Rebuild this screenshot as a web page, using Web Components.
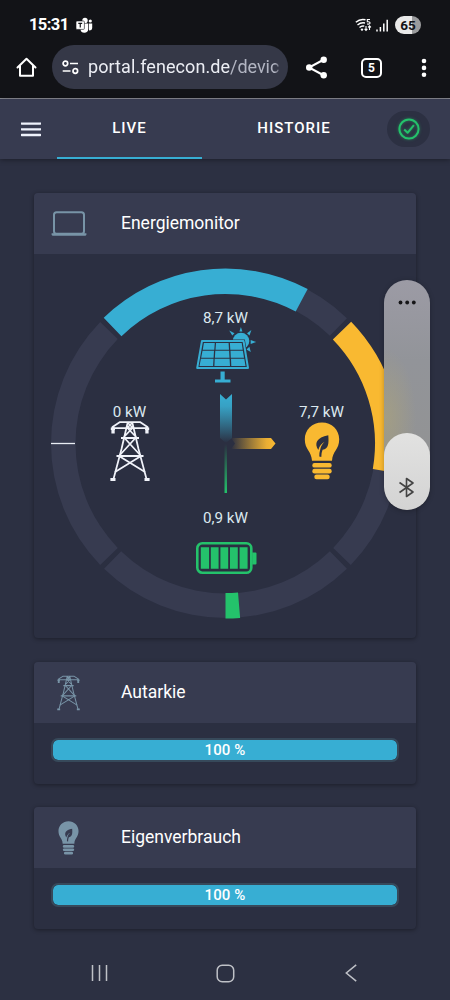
<!DOCTYPE html>
<html lang="de">
<head>
<meta charset="utf-8">
<meta name="viewport" content="width=device-width">
<title>Energiemonitor</title>
<style>
html,body{margin:0;padding:0;height:100%;background:#2c3042;overflow:hidden}
body{font-family:Roboto,"Liberation Sans",sans-serif;color:#fff}
</style>
</head>
<body>
<phone-screen></phone-screen>
<script>
function define(name, css, html, setup) {
  const t = document.createElement('template');
  t.innerHTML = `<style>:host{display:block;box-sizing:border-box}*{box-sizing:border-box}svg{display:block;flex:none}${css}</style>${html}`;
  customElements.define(name, class extends HTMLElement {
    constructor() {
      super();
      this.attachShadow({ mode: 'open' }).appendChild(t.content.cloneNode(true));
    }
    connectedCallback() { if (setup) setup(this, this.shadowRoot); }
  });
}

/* ---------- shared glyphs ---------- */
const GLYPHS = {
  laptop: ['0 0 36 26', '<rect x="3" y="1.2" width="30" height="21.6" rx="2.6" fill="none" stroke="currentColor" stroke-width="2"/><path d="M.6 22.2H35.4V23.6Q35.2 24.8 34 24.8H2Q.8 24.8.6 23.6Z" fill="currentColor"/>'],
  pylon: ['0 0 40 62', `<g fill="none" stroke="currentColor" stroke-width="1.75" stroke-linejoin="round">
    <path d="M2.5 8V7L10 2H30L37.500 7V8M2.500 8H37.500M17.800 2 11.500 29 3.500 59M22.200 2 28.500 29 36.500 59M17.500 8 27 18M22.500 8 13 18M17 2 23 8M23 2 17 8"/>
    <path d="M11 18H29M6.500 36H33.500" stroke-width="2.200"/><path d="M14.500 18 31 36M25.500 18 9 36M9 36 35 52M31 36 5 52"/></g>
    <path d="M.8 7.500H5V10H4.700V13.500H1.400V10H.8ZM39.200 7.500H35V10H35.300V13.500H38.600V10H39.200ZM.4 58H5.500V61H.4ZM34.500 58H39.600V61H34.500Z" fill="currentColor"/>`],
  bulb: ['0 0 36 58', `<path d="M18 .5C8.300.5.8 7.900.8 17.200C.8 28 7.400 28.500 8 38.800H28C28.600 28.500 35.200 28 35.200 17.200C35.200 7.900 27.700.5 18 .5Z" fill="currentColor"/>
    <rect x="8.300" y="41" width="19.400" height="4.600" rx="2.200" fill="currentColor"/><rect x="8.300" y="46.800" width="19.400" height="4.600" rx="2.200" fill="currentColor"/><rect x="10.300" y="52.500" width="15.400" height="4.700" rx="2.200" fill="currentColor"/>
    <path d="M24.300 13.300C24.900 21.500 24.600 27 18.600 27.800Q17.400 30.500 17.300 35L15.300 34.600Q15.200 30.500 16.400 26.800C17 23.800 18.600 22 20.600 19.800C17.600 21.500 15.400 24 14.300 28C10 21.500 12.500 15.500 24.300 13.300Z" fill="var(--hole,#2c3042)"/>`],
  solar: ['0 0 60 55', `<g fill="currentColor"><circle cx="45" cy="12" r="8.300"/>
    <path d="M43.400 2.400 44.900-1.900 46.400 2.400ZM51 4.300 55.400 1 53.500 6.400ZM54.700 11 60.200 13 54.700 15ZM53.400 17.800 54.800 23 50.400 20.600ZM38.500 4.200 33.200 1.600 36.300 6.600Z"/></g>
    <path d="M6 12H47.500L52 39H1.200Z" fill="#2c3042" stroke="#2c3042" stroke-width="3.200"/>
    <path d="M6 12H47.500L52 39H1.200Z" fill="none" stroke="currentColor" stroke-width="2" stroke-linejoin="round"/>
    <path fill="currentColor" d="M7.900 14H18.800L18.300 20.700H6.800ZM20 14H32.600L33 20.700H19.500ZM33.900 14H45.700L46.700 20.700H34.300ZM6.500 21.800H18L17.600 28.700H5.200ZM19.300 21.800H33.100L33.500 28.700H18.900ZM34.500 21.800H46.900L48 28.700H34.800ZM4.900 29.800H17.500L17.100 37H3.500ZM18.700 29.800H33.600L34 37H18.400ZM35 29.800H48.300L49.500 37H35.300ZM24.500 42.500H28.700V50.500H34.500V53.500H19V50.500H24.500Z"/>`],
  battery: ['0 0 61 32', `<rect x="1.300" y="1.300" width="54" height="29.400" rx="5" fill="none" stroke="currentColor" stroke-width="2.600"/><path fill="currentColor" d="M4.800 5.300h8.300v21.500H4.800ZM14.800 5.300h7.800v21.500h-7.800ZM24.400 5.300h7.800v21.500h-7.800ZM34 5.300h7.800v21.500H34ZM43.600 5.300h8v21.500h-8ZM56.200 10.500H59.500Q60.500 10.500 60.500 11.500V21.500Q60.500 22.500 59.500 22.500H56.200Z"/>`]
};
define('energy-glyph', ':host{display:block}svg{width:100%;height:100%}', '<svg></svg>', (el, root) => {
  const [box, body] = GLYPHS[el.getAttribute('name')];
  const svg = root.querySelector('svg');
  svg.setAttribute('viewBox', box);
  svg.setAttribute('overflow', 'visible');
  svg.innerHTML = body;
});

/* ---------- system status bar ---------- */
define('status-bar', `
:host{height:48px;padding:2px 29px 0;display:flex;align-items:center;background:#121317}
.time{font:700 16.500px/20px Roboto,sans-serif;letter-spacing:-.6px;margin-right:7.500px}
.fill{flex:1}
.wifi{margin-right:4px}
.batt{width:26px;height:18px;border-radius:9px;background:linear-gradient(90deg,#e9e9e9 65%,#9a9b9d 65%);color:#121317;font:700 13.500px/18px Roboto,sans-serif;text-align:center;margin-left:6px}
`, `
<span class="time">15:31</span>
<svg width="17" height="17" viewBox="0 0 17 17"><g fill="#fff"><circle cx="9" cy="3.400" r="2.700"/><circle cx="14.300" cy="4" r="1.600"/><path d="M4.500 6.500H12.300V12Q12 15.800 8.300 15.800Q5 15.800 4.500 12.500ZM13 6.500H16.200V11Q16 13.500 13 13.500Z"/></g><rect x="0" y="4" width="8.400" height="8.400" rx="1" fill="#fff" stroke="#121317" stroke-width=".6"/><path d="M2.300 6.300H6.200M4.250 6.300V10.600" stroke="#121317" stroke-width="1.200"/></svg>
<span class="fill"></span>
<svg class="wifi" width="17" height="14" viewBox="0 0 17 14"><g fill="none" stroke="#fff" stroke-width="1.400"><path d="M.8 4.200Q5 .5 10.500 1.800M2.500 7Q6 4 10 5M4.500 9.500Q6.800 7.500 9.300 8.200"/><path d="M15 1.500H12.300V3.800Q15 3.400 15 5Q15 6.500 12 6" stroke-width="1.100"/><path d="M11 8V12M9.600 10.800 11 12.400 12.400 10.800M14.500 12V8M13.100 9.400 14.500 7.800 15.900 9.400" stroke-width="1.100"/></g><circle cx="7" cy="11.600" r="1.200" fill="#fff"/></svg>
<svg width="13" height="13" viewBox="0 0 13 13"><path d="M1 10.500V12.500M4.400 8V12.500M7.800 4.500V12.500M11.200.8V12.500" stroke="#fff" stroke-width="1.500"/></svg>
<span class="batt">65</span>`);

/* ---------- browser toolbar ---------- */
define('browser-bar', `
:host{height:51px;padding:0 15px 10px 16px;display:flex;align-items:center;background:#121317;border-bottom:1px solid #898b94}
:host>svg{margin-top:-1px}
.url{width:236px;height:44px;margin:-2px 0 0 15px;padding:0 8px 0 10px;border-radius:22px;background:#353847;display:flex;align-items:center;flex:none}
.text{margin-left:9px;width:192px;overflow:hidden;white-space:nowrap;font:400 18px/24px Roboto,sans-serif;letter-spacing:.07px;color:#eceef4;-webkit-mask:linear-gradient(90deg,#000 187px,transparent 193px)}
.text i{font-style:normal;color:#b2b5c2;letter-spacing:-.05px}
.share{margin-left:17px}
.tabs{margin:-1px 0 0 33px;width:21px;height:20px;border:2px solid #fff;border-radius:5px;font:700 12px/16px Roboto,sans-serif;text-align:center}
.more{margin-left:39px}
`, `
<svg width="21" height="21" viewBox="0 0 21 21" fill="none" stroke="#fff" stroke-width="2" stroke-linejoin="round" stroke-linecap="round"><path d="M1.500 10.500 10.500 1.800 19.500 10.500M4 9V18.800H17V9"/></svg>
<div class="url"><svg width="17" height="15" viewBox="0 0 17 15" fill="none" stroke="#fff" stroke-width="1.700"><circle cx="3.400" cy="3.500" r="2.300"/><path d="M8 3.500H16M.7 11H8.500"/><circle cx="13.300" cy="11" r="2.300"/></svg><div class="text">portal.fenecon.de<i>/device</i></div></div>
<svg class="share" width="23" height="23" viewBox="0 0 23 23"><path d="M19 3.500 4 11.500 19 19.500" fill="none" stroke="#fff" stroke-width="2"/><circle cx="18.700" cy="3.700" r="3.200" fill="#fff"/><circle cx="4.200" cy="11.500" r="3.200" fill="#fff"/><circle cx="18.700" cy="19.200" r="3.200" fill="#fff"/></svg>
<span class="tabs">5</span>
<svg class="more" width="6" height="20" viewBox="0 0 6 20" fill="#fff"><circle cx="3" cy="3" r="2.300"/><circle cx="3" cy="9.900" r="2.300"/><circle cx="3" cy="16.800" r="2.300"/></svg>`);

/* ---------- app tabs ---------- */
define('app-tabs', `
:host{height:60px;display:flex;align-items:center;background:#373b50;box-shadow:0 1px 5px rgba(0,0,0,.38);position:relative}
.menu{margin:0 16px 0 21px}
.tab{height:60px;width:145px;display:flex;align-items:center;justify-content:center;font:500 15px/20px Roboto,sans-serif;letter-spacing:1px;border-bottom:2px solid transparent}
.on{border-color:#37aed3}
.wide{width:184px}
.state{width:43px;height:36px;margin-left:1px;border-radius:18px;background:#2c3042;display:grid;place-items:center}
.state svg{filter:drop-shadow(0 0 1.500px rgba(36,194,107,.5))}
`, `
<svg class="menu" width="20" height="15" viewBox="0 0 20 15"><path d="M.7 1.600H19.300M.7 7.300H19.300M.7 13H19.300" stroke="#eef2fb" stroke-width="2.300" stroke-linecap="round"/></svg>
<div class="tab on">LIVE</div><div class="tab wide">HISTORIE</div>
<div class="state"><svg width="22" height="22" viewBox="0 0 22 22" fill="none" stroke="#24c26b" stroke-width="2"><circle cx="11" cy="11" r="9.600"/><path d="M6.200 11.500 9.600 14.800 15.900 7.200" stroke-linejoin="round"/></svg></div>`);

/* ---------- card with icon header ---------- */
define('info-card', `
:host{background:#2b2f41;border-radius:4px;overflow:hidden;box-shadow:0 1px 4px rgba(0,0,0,.38);flex:none}
header{height:61px;background:#373b50;display:flex;align-items:center}
.icon{width:69px;display:grid;place-items:center;color:#7894a7;--hole:#373b50}
h2{margin:0 0 1px 18px;font:400 17.500px/24px Roboto,sans-serif}
`, `<header><div class="icon"><slot name="icon"></slot></div><h2></h2></header><slot></slot>`,
(el, root) => { root.querySelector('h2').textContent = el.getAttribute('heading'); });

define('percent-bar', `
:host{margin:15px 17px 0;height:24px;border:2px solid #37495a;border-radius:7px;overflow:hidden;background:#2b2f41}
div{height:100%;border-radius:5px;background:#37aed3;font:500 15px/20px Roboto,sans-serif;letter-spacing:.1px;text-align:center}
`, '<div></div>', (el, root) => {
  const bar = root.querySelector('div');
  bar.style.width = el.getAttribute('value') + '%';
  bar.textContent = el.getAttribute('value') + ' %';
});

/* ---------- energy ring ---------- */
define('energy-ring', `
:host{height:384px;position:relative}
.chart{width:382px;height:384px}
.node{position:absolute;width:90px;display:flex;flex-direction:column;align-items:center;color:var(--tone)}
.node span{font:400 15.200px/20px Roboto,sans-serif;color:#dce9f0;white-space:nowrap}
.sun{left:146.500px;top:54px;--tone:#37aed3}.grid{left:50.500px;top:147.500px;--tone:#f1f3fa}
.load{left:242.500px;top:147.500px;--tone:#f9b931}.store{left:146.500px;top:253.500px;--tone:#24c26b}
`, `
<svg class="chart" viewBox="34 254 382 384">
<defs>
<linearGradient id="b" x1="0" y1="0" x2="0" y2="1"><stop offset="0" stop-color="#37aed3"/><stop offset=".25" stop-color="#37a1c4"/><stop offset="1" stop-color="#37aed3" stop-opacity="0"/></linearGradient>
<linearGradient id="y"><stop offset="0" stop-color="#f9b931" stop-opacity="0"/><stop offset=".8" stop-color="#e9ae34"/><stop offset="1" stop-color="#f9b931"/></linearGradient>
<linearGradient id="g" x1="0" y1="0" x2="0" y2="1"><stop offset="0" stop-color="#24c26b" stop-opacity="0"/><stop offset="1" stop-color="#24c26b"/></linearGradient>
</defs>
<g class="arcs"></g>
<path d="M51 443.500H75" stroke="#e9edf4" stroke-width="1.300"/>
<path d="M220 394 226 399.500 232 394V438L226 443 220 438Z" fill="url(#b)"/>
<path d="M231 438H271L275.500 443.500 271 449H231L235 443.500Z" fill="url(#y)"/>
<path d="M224.500 444H227V493H224.500Z" fill="url(#g)"/>
</svg>
<div class="node sun"><span>8,7 kW</span><energy-glyph name="solar" style="width:60px;height:55px;margin:1px 0 0 1px"></energy-glyph></div>
<div class="node grid"><span>0 kW</span><energy-glyph name="pylon" style="width:40px;height:62px;margin-top:-2px"></energy-glyph></div>
<div class="node load"><span>7,7 kW</span><energy-glyph name="bulb" style="width:36px;height:58px;margin-top:0"></energy-glyph></div>
<div class="node store"><span>0,9 kW</span><energy-glyph name="battery" style="width:61px;height:32px;margin:14.500px 0 0 1px"></energy-glyph></div>
`, (el, root) => {
  const cx = 225.5, cy = 443.500;
  const pt = (r, a) => {
    const t = a * Math.PI / 180;
    return (cx + r * Math.sin(t)).toFixed(2) + ' ' + (cy - r * Math.cos(t)).toFixed(2);
  };
  const arc = (a, b, color, outer = 174.500, inner = 150) =>
    `<path fill="${color}" d="M${pt(outer, a)}A${outer} ${outer} 0 0 1 ${pt(outer, b)}L${pt(inner, b)}A${inner} ${inner} 0 0 0 ${pt(inner, a)}Z"/>`;
  root.querySelector('.arcs').innerHTML =
    [0, 90, 180, 270].map(m => arc(m - 44.1, m + 44.1, '#373b50')).join('') +
    arc(-44.1, 28, '#37aed3', 175, 149.500) + arc(45.900, 99.800, '#f9b931', 175, 149.500) + arc(175.200, 180, '#24c26b', 175, 149.500);
});

/* ---------- floating volume slider ---------- */
define('volume-panel', `
:host{position:absolute;left:384px;top:280px;width:45.500px;height:229.500px;border-radius:23px;overflow:hidden;display:flex;flex-direction:column;align-items:center;justify-content:space-between;box-shadow:0 1px 5px rgba(0,0,0,.25);
background:radial-gradient(ellipse 30px 68px at 2px 137px,rgba(178,167,116,.5),transparent),linear-gradient(#9c9ba5,#929499 35%,#929394 75%,#888)}
.dots{margin-top:20px}
.thumb{width:100%;height:76.500px;border-radius:23px;background:linear-gradient(#e2e2e1,#d3d3d3);display:flex;justify-content:center;align-items:flex-end;padding-bottom:12px}
`, `<svg class="dots" width="18" height="5" viewBox="0 0 18 5" fill="#151517"><circle cx="2.500" cy="2.500" r="1.900"/><circle cx="9.200" cy="2.500" r="1.900"/><circle cx="15.800" cy="2.500" r="1.900"/></svg>
<div class="thumb"><svg width="17" height="21" viewBox="0 0 17 21"><path d="M1.500 5.500 15 15 8.500 19.500V1.500L15 6 1.500 15.500" fill="none" stroke="#444" stroke-width="1.600" stroke-linejoin="round"/></svg></div>`);

/* ---------- system navigation ---------- */
define('system-nav', `
:host{height:54px;display:grid;grid-template-columns:repeat(3,126px);justify-content:center;align-items:center;justify-items:center}
svg{fill:none;stroke:#bfc1c7;stroke-width:1.500}
`, `
<svg width="17" height="18" viewBox="0 0 17 18"><path d="M1.500 1V17M8.500 1V17M15.500 1V17"/></svg>
<svg width="19" height="19" viewBox="0 0 19 19"><rect x="1.200" y="1.200" width="16.500" height="16.500" rx="5"/></svg>
<svg width="12" height="18" viewBox="0 0 12 18"><path d="M11.200.8 1.300 9 11.200 17.200"/></svg>`);

define('phone-screen', `
:host{width:450px;height:1000px;position:relative;display:flex;flex-direction:column;background:#2c3042}
main{flex:1;min-height:0;padding:34px 34px 0;display:flex;flex-direction:column}
.main{height:445px}.small{height:122px;margin-top:24px}.last{margin-top:23px}
`, `
<status-bar></status-bar><browser-bar></browser-bar><app-tabs></app-tabs>
<main>
<info-card class="main" heading="Energiemonitor"><energy-glyph slot="icon" name="laptop" style="width:36px;height:26px"></energy-glyph><energy-ring></energy-ring></info-card>
<info-card class="small" heading="Autarkie"><energy-glyph slot="icon" name="pylon" style="width:23px;height:36px"></energy-glyph><percent-bar value="100"></percent-bar></info-card>
<info-card class="small last" heading="Eigenverbrauch"><energy-glyph slot="icon" name="bulb" style="width:21px;height:34px"></energy-glyph><percent-bar value="100"></percent-bar></info-card>
</main>
<system-nav></system-nav>
<volume-panel></volume-panel>`);
</script>
</body>
</html>
